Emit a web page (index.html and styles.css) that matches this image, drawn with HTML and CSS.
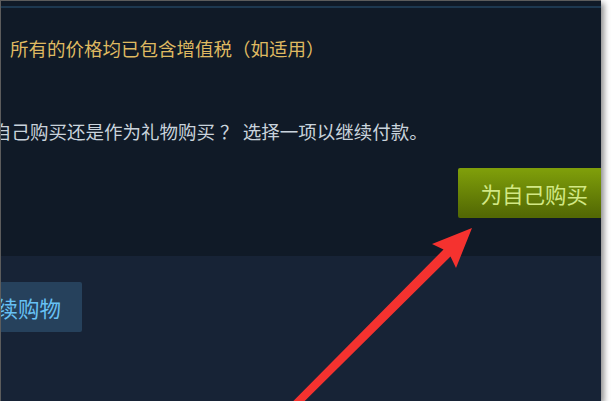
FILE: index.html
```html
<!DOCTYPE html>
<html lang="zh-CN">
<head>
<meta charset="utf-8">
<title>购物车</title>
<link rel="stylesheet" href="styles.css">
</head>
<body>
<div class="frame">
  <div class="top">
    <div class="topline"></div>
    <p class="tax">所有的价格均已包含增值税（如适用）</p>
    <p class="question">自己购买还是作为礼物购买<span class="qmark">？</span> 选择一项以继续付款。</p>
    <div class="buyrow">
      <a class="btn btn-green">为自己购买</a>
    </div>
  </div>
  <div class="bottom">
    <a class="btn btn-blue">继续购物</a>
  </div>
  <svg class="arrow" width="601" height="401" viewBox="0 0 601 401">
    <polygon points="472,228 456,268 450.5,256.5 292.8,412.8 287.2,407.2 443.5,249.5 432,244" fill="#f5322f"/>
  </svg>
</div>
</body>
</html>
```

FILE: styles.css
```css
html, body {
  margin: 0;
  padding: 0;
  background: #ffffff;
}

body {
  font-family: "Noto Sans CJK SC", "Noto Sans", sans-serif;
}

.frame {
  position: relative;
  width: 601px;
  height: 401px;
  box-sizing: border-box;
  border-top: 1px solid #5c5c5c;
  border-left: 1px solid #5c5c5c;
  background: #101a27;
  overflow: hidden;
  display: flex;
  flex-direction: column;
  box-shadow: 3px 3px 6px rgba(0, 0, 0, 0.45);
}

.top {
  padding-top: 5px;
  padding-bottom: 38px;
}

.topline {
  height: 2px;
  background: #1d3850;
}

.tax {
  margin: 27px 0 0 9px;
  font-size: 18.5px;
  line-height: 26px;
  color: #dfb961;
  white-space: nowrap;
}

.question {
  margin: 57px 0 0 -8px;
  font-size: 18.5px;
  line-height: 26px;
  color: #c9d3dc;
  white-space: nowrap;
}

.qmark {
  margin-left: 5px;
}

.buyrow {
  margin-top: 24px;
  display: flex;
  justify-content: flex-end;
  margin-right: -9px;
}

.btn {
  display: flex;
  align-items: center;
  height: 50px;
  box-sizing: border-box;
  padding: 0 22px;
  border-radius: 2px;
  font-size: 21.5px;
  white-space: nowrap;
}

.btn-green {
  background: linear-gradient(to bottom, #7e9d0a 5%, #536904 95%);
  color: #d2e885;
}

.bottom {
  flex: 1;
  background: #172336;
  padding-top: 26px;
  display: flex;
  align-items: flex-start;
}

.btn-blue {
  margin-left: -48px;
  padding-right: 21px;
  background: #26415c;
  color: #67c1f5;
}

.arrow {
  position: absolute;
  left: -1px;
  top: -1px;
  pointer-events: none;
}
```
